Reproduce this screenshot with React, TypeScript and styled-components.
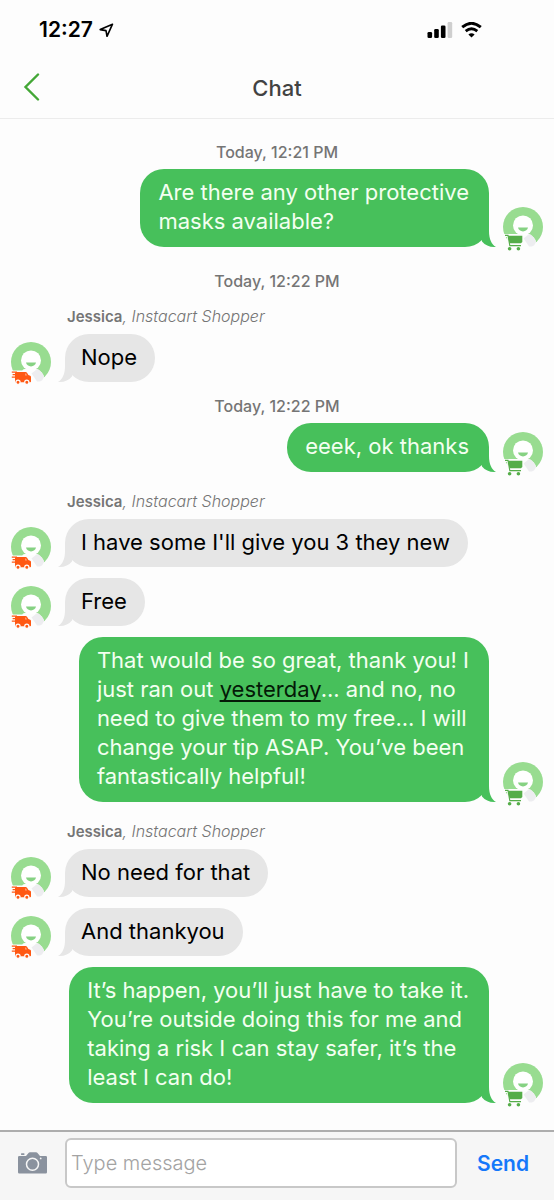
import React from "react";
import styled, { createGlobalStyle, css } from "styled-components";

const GlobalStyle = createGlobalStyle`
  *, *::before, *::after { box-sizing: border-box; }
  body {
    margin: 0;
    background: #fdfdfd;
    font-family: Inter, "Liberation Sans", sans-serif;
  }
`;

const Screen = styled.div`
  display: flex;
  flex-direction: column;
  min-height: 100vh;
`;

const StatusBar = styled.div`
  display: flex;
  align-items: center;
  justify-content: space-between;
  height: 60px;
  padding: 0 72px 0 39px;
`;

const StatusGroup = styled.div<{ $gap: number }>`
  display: flex;
  align-items: center;
  gap: ${(p) => p.$gap}px;
`;

const Clock = styled.span`
  font-size: 21px;
  font-weight: 600;
  line-height: 24px;
  color: #000;
`;

const Header = styled.header`
  display: grid;
  grid-template-columns: 64px 1fr 64px;
  align-items: center;
  height: 59px;
  padding-bottom: 3px;
  border-bottom: 1px solid #ececec;
`;

const BackButton = styled.button`
  display: flex;
  padding: 0 0 2px 23px;
  border: 0;
  background: none;
`;

const Title = styled.h1`
  margin: 0;
  font-size: 22px;
  font-weight: 500;
  line-height: 28px;
  text-align: center;
  color: #424242;
`;

const Thread = styled.main`
  flex: 1;
  display: flex;
  flex-direction: column;
  padding: 23px 11px 27px;
`;

const Timestamp = styled.time`
  margin-bottom: 7px;
  font-size: 16px;
  font-weight: 500;
  line-height: 20px;
  text-align: center;
  color: #757575;
`;

const Sender = styled.p`
  margin: 0 0 7px 56px;
  font-size: 15px;
  line-height: 20px;
  color: #757575;

  time + & { margin-top: 9px; }
  b { font-weight: 600; }
  i { font-size: 16px; font-weight: 300; line-height: 16px; }
`;

const Group = styled.section<{ $gap: number }>`
  display: flex;
  flex-direction: column;
  margin-bottom: ${(p) => p.$gap}px;
`;

const MessageRow = styled.div<{ $mine?: boolean }>`
  display: flex;
  flex-direction: ${(p) => (p.$mine ? "row-reverse" : "row")};
  align-items: flex-end;
  gap: 14px;

  & + & { margin-top: 11px; }
`;

const Bubble = styled.div<{ $mine?: boolean }>`
  position: relative;
  border-radius: 24px;
  font-size: 22px;
  line-height: 29px;
  ${(p) =>
    p.$mine
      ? css`
          padding: 9px 20px 11px 18px;
          background: #47c05b;
          color: #f3fff0;
        `
      : css`
          padding: 9px 18px 10px 16px;
          background: #e6e6e6;
          color: #000;
        `}
`;

const Line = styled.span`
  display: block;
`;

const Tail = styled.svg<{ $mine?: boolean }>`
  position: absolute;
  bottom: 0;
  ${(p) =>
    p.$mine
      ? css`
          right: -7px;
        `
      : css`
          left: -7px;
          transform: scaleX(-1);
        `}
`;

const AvatarSvg = styled.svg`
  flex: none;
  overflow: visible;
`;

const DayLink = styled.a`
  color: #041a07;
  text-decoration: underline;
  text-decoration-thickness: 2px;
  text-underline-offset: 3px;
  text-decoration-skip-ink: none;
`;

const Composer = styled.form`
  display: flex;
  align-items: center;
  height: 70px;
  padding: 0 25px 7px 18px;
  border-top: 2px solid #adadad;
  background: #f6f6f6;
`;

const CameraButton = styled.button`
  display: flex;
  padding: 0 18px 0 0;
  border: 0;
  background: none;
`;

const MessageInput = styled.input`
  flex: 1;
  min-width: 0;
  height: 50px;
  padding: 0 4px;
  border: 2px solid #c8c8c8;
  border-radius: 6px;
  background: #fff;
  font: 300 20px/24px Inter, sans-serif;
  color: #222;

  &::placeholder { color: #a3a3a3; opacity: 1; }
`;

const SendButton = styled.button`
  padding: 3px 0 0 20px;
  border: 0;
  background: none;
  font: 600 21px/24px Inter, sans-serif;
  color: #1478fa;
`;

function Avatar({ mine }: { mine?: boolean }) {
  return (
    <AvatarSvg width="40" height="40" viewBox="0 0 40 40" aria-hidden="true">
      <circle cx="20" cy="20" r="20" fill="#98dc90" />
      <path d="M12 27.5Q20 25 26 27Q32 30 33 35L31 38.5Q26 41 20 41Q12 41 7 37Z" fill="#fdfdfd" />
      <path d="M20.5 31.5L26.5 26.8Q31.5 30 33 35L31 38.4Q29 39.6 26 39.6Z" fill="#ededf0" />
      <circle cx="20" cy="18.4" r="10" fill="#fff" />
      <path d="M15 20.6H25Q24 24.4 20 24.4T15 20.6Z" fill="#86d283" />
      {mine ? (
        <g>
          <path d="M1 27H20.5V37L17 41H5L4 30H1Z" fill="#fdfdfd" />
          <path d="M5 28.8H19.3V35L18 36.3H6.4Z" fill="#55ad49" />
          <path d="M2 28.4H5L6.8 38.6H18" fill="none" stroke="#55ad49" strokeWidth="1.1" />
          <circle cx="6.6" cy="41.8" r="1.8" fill="#55ad49" />
          <circle cx="15.4" cy="41.8" r="1.8" fill="#55ad49" />
        </g>
      ) : (
        <g>
          <path d="M0 28.5H15.5L20.8 33V42H2Z" fill="#fdfdfd" />
          <path d="M5 30H14.6Q15.4 30 16 30.8L17.4 33L19.2 33.8Q20 34.2 20 35V39.4Q20 40.2 19.2 40.2H5Q4 40.2 4 39.2V31Q4 30 5 30Z" fill="#ff5813" />
          <path d="M0.8 30.1H6M1.6 32.6H6M0.8 35.1H6" fill="none" stroke="#ff5813" strokeWidth="1.1" />
          <path d="M14 31.5H15L16.2 33.5H14Z" fill="#ff9a6e" />
          <circle cx="7" cy="40.3" r="2.1" fill="#ff5813" stroke="#fdfdfd" strokeWidth="1.2" />
          <circle cx="15.8" cy="40.3" r="2.1" fill="#ff5813" stroke="#fdfdfd" strokeWidth="1.2" />
        </g>
      )}
    </AvatarSvg>
  );
}

function Message({ mine, lines }: { mine?: boolean; lines: React.ReactNode[] }) {
  return (
    <MessageRow $mine={mine}>
      <Avatar mine={mine} />
      <Bubble $mine={mine}>
        <Tail $mine={mine} width="16" height="24" viewBox="0 0 16 24" aria-hidden="true">
          <path
            d="M9 0V8C9 16 11.5 21.5 16 24C10 24.2 5.5 22.5 2 18.4L0 0Z"
            fill={mine ? "#47c05b" : "#e6e6e6"}
          />
        </Tail>
        {lines.map((line, index) => (
          <Line key={index}>{line}</Line>
        ))}
      </Bubble>
    </MessageRow>
  );
}

function ShopperName() {
  return (
    <Sender>
      <b>Jessica</b>
      <i>, Instacart Shopper</i>
    </Sender>
  );
}

export default function App() {
  return (
    <Screen>
      <GlobalStyle />
      <StatusBar>
        <StatusGroup $gap={6}>
          <Clock>12:27</Clock>
          <svg width="15" height="15" viewBox="0 0 15 15" aria-hidden="true">
            <path d="M13.5 1.2L1.2 6.6L7 7.6L8 13.3Z" fill="none" stroke="#000" strokeWidth="1.6" strokeLinejoin="round" />
          </svg>
        </StatusGroup>
        <StatusGroup $gap={8}>
          <svg width="26" height="16" viewBox="0 0 26 16" aria-hidden="true">
            <rect x="0.5" y="10" width="4.6" height="6" rx="1.3" />
            <rect x="7.2" y="7" width="4.6" height="9" rx="1.3" />
            <rect x="13.9" y="3.5" width="4.6" height="12.5" rx="1.3" />
            <rect x="20.6" y="0" width="4.6" height="16" rx="1.3" fill="#cfcfcf" />
          </svg>
          <svg width="21" height="16" viewBox="0 0 21 16" aria-hidden="true">
            <path d="M1.2 5.2Q10.5 -2.6 19.8 5.2" fill="none" stroke="#000" strokeWidth="2.9" />
            <path d="M4.7 9.2Q10.5 4.4 16.3 9.2" fill="none" stroke="#000" strokeWidth="2.8" />
            <path d="M7.4 12.4Q10.5 9.9 13.6 12.4L10.5 15.6Z" />
          </svg>
        </StatusGroup>
      </StatusBar>
      <Header>
        <BackButton type="button" aria-label="Back">
          <svg width="17" height="28" viewBox="0 0 17 28" aria-hidden="true">
            <path d="M15 1.5L2.5 14L15 26.5" fill="none" stroke="#43a736" strokeWidth="2.4" strokeLinecap="round" />
          </svg>
        </BackButton>
        <Title>Chat</Title>
      </Header>
      <Thread>
        <Group $gap={24}>
          <Timestamp>Today, 12:21 PM</Timestamp>
          <Message mine lines={["Are there any other protective", "masks available?"]} />
        </Group>
        <Group $gap={14}>
          <Timestamp>Today, 12:22 PM</Timestamp>
          <ShopperName />
          <Message lines={["Nope"]} />
        </Group>
        <Group $gap={20}>
          <Timestamp>Today, 12:22 PM</Timestamp>
          <Message mine lines={["eeek, ok thanks"]} />
        </Group>
        <Group $gap={20}>
          <ShopperName />
          <Message lines={["I have some I'll give you 3 they new"]} />
          <Message lines={["Free"]} />
          <Message
            mine
            lines={[
              "That would be so great, thank you! I",
              <>
                just ran out <DayLink href="#yesterday">yesterday</DayLink>... and no, no
              </>,
              "need to give them to my free... I will",
              "change your tip ASAP. You’ve been",
              "fantastically helpful!",
            ]}
          />
        </Group>
        <Group $gap={0}>
          <ShopperName />
          <Message lines={["No need for that"]} />
          <Message lines={["And thankyou"]} />
          <Message
            mine
            lines={[
              "It’s happen, you’ll just have to take it.",
              "You’re outside doing this for me and",
              "taking a risk I can stay safer, it’s the",
              "least I can do!",
            ]}
          />
        </Group>
      </Thread>
      <Composer onSubmit={(e) => e.preventDefault()}>
        <CameraButton type="button" aria-label="Add photo">
          <svg width="29" height="22" viewBox="0 0 29 22" aria-hidden="true">
            <path d="M1.2 4H8L10.5 1Q11 0.3 12 0.3H18Q19 0.3 19.5 1L22 4H27.8Q29 4 29 5.2V20.3Q29 21.5 27.8 21.5H1.2Q0 21.5 0 20.3V5.2Q0 4 1.2 4Z" fill="#8a929e" />
            <rect x="3" y="1.3" width="3.5" height="1.6" rx="0.6" fill="#8a929e" />
            <circle cx="14.5" cy="12.3" r="6" fill="none" stroke="#f6f6f6" strokeWidth="1.5" />
            <circle cx="22.7" cy="6.4" r="0.9" fill="#f6f6f6" />
          </svg>
        </CameraButton>
        <MessageInput type="text" aria-label="Message" placeholder="Type message" />
        <SendButton type="submit">Send</SendButton>
      </Composer>
    </Screen>
  );
}
